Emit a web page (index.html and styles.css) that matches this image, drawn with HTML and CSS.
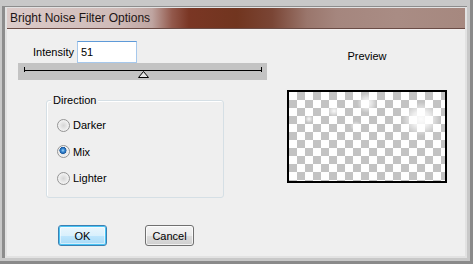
FILE: index.html
```html
<!DOCTYPE html>
<html>
<head>
<meta charset="utf-8">
<link rel="stylesheet" href="styles.css">
</head>
<body>
<div class="window">
  <div class="frame">
    <div class="titlebar">Bright Noise Filter Options</div>
    <div class="content">
      <div class="left">
        <div class="intensity">
          <label class="lbl" for="int">Intensity</label>
          <input id="int" class="num" type="text" value="51">
        </div>
        <div class="slider">
          <div class="track"></div>
          <svg class="thumb" width="11" height="7" viewBox="0 0 11 7"><polygon points="5.5,0.5 0.5,6.5 10.5,6.5" fill="#e4e4e4" stroke="#000" stroke-width="1"/></svg>
        </div>
        <div class="group">
          <span class="legend">Direction</span>
          <div class="radios">
            <div class="opt"><span class="radio"></span><span>Darker</span></div>
            <div class="opt"><span class="radio on"></span><span>Mix</span></div>
            <div class="opt"><span class="radio"></span><span>Lighter</span></div>
          </div>
        </div>
        <div class="buttons">
          <button class="btn def">OK</button>
          <button class="btn">Cancel</button>
        </div>
      </div>
      <div class="right">
        <div class="prev-label">Preview</div>
        <div class="preview"></div>
      </div>
    </div>
  </div>
</div>
</body>
</html>
```
FILE: styles.css
```css
* { box-sizing: border-box; }
html, body { margin: 0; padding: 0; background: #c6c6c6; }
body { font-family: "Liberation Sans", Arial, sans-serif; font-size: 11px; color: #000; }

.window {
  width: 473px; height: 264px;
  background: #c8c8c8;
  border-right: 3px solid #8a8a8a;
  border-bottom: 3px solid #8a8a8a;
  padding: 6px 3px 3px 2px;
}
.frame {
  height: 100%;
  border-top: 1px solid #8d8d8d;
  border-left: 3px solid #8d8d8d;
  background: #e2e2e2;
  padding: 1px 2px 2px 2px;
  display: flex; flex-direction: column;
}
.titlebar {
  height: 22px;
  font-size: 12px;
  line-height: 21px;
  padding-left: 3px;
  color: #1c1414;
  border-bottom: 1px solid #f4f0f0;
  background: linear-gradient(to right, #dccbc9 0px, #cfbbb8 110px, #bfa5a1 145px, #93594c 165px, #7a3624 182px, #71351f 230px, #7a4535 265px, #9a766c 300px, #a5867e 330px, #a98c84 390px, #a6887f 458px);
  box-shadow: inset 0 -1px 0 #6a4c46;
}
.content {
  flex: 1;
  background: #efefef;
  display: flex;
}
.left { width: 270px; }
.right { flex: 1; }

.intensity {
  margin-top: 11px;
  padding-left: 26px;
  display: flex; align-items: center;
}
.lbl { width: 44px; }
.num {
  width: 60px; height: 22px;
  border: 1px solid #a6c8ec;
  border-top-color: #5e9ad8;
  background: #fff;
  font-family: inherit; font-size: 11px;
  padding: 0 3px; margin: 0;
  outline: none;
}
.slider {
  margin-left: 11px;
  width: 249px; height: 17px;
  background: #c3c3c3;
  padding-top: 4px;
}
.track {
  margin: 0 5px 0 6px;
  height: 5px;
  border-left: 1px solid #000;
  border-right: 1px solid #000;
  background: linear-gradient(#000, #000) 0 3px / 100% 1px no-repeat;
}
.thumb { display: block; margin: -1px 0 0 120px; }

.group {
  margin: 20px 0 0 39px;
  width: 178px; height: 98px;
  border: 1px solid #d5dfe5;
  border-radius: 3px;
  box-shadow: inset 1px 1px 0 #fff;
}
.legend {
  display: inline-block;
  margin: -7px 0 0 4px;
  padding: 0 2px;
  line-height: 13px;
  background: #efefef;
  vertical-align: top;
}
.radios { margin-top: -1px; }
.opt {
  height: 26.5px;
  display: flex; align-items: center;
  padding-left: 10px;
  gap: 3px;
}
.radio {
  width: 13px; height: 13px;
  border-radius: 50%;
  border: 1px solid #949494;
  background: radial-gradient(circle at 50% 50%, #d6d6d6 0, #e6e6e6 3px, #f6f6f6 6px);
}
.radio.on {
  background:
    radial-gradient(circle at 45% 40%, #a8dcf8 0, #3a8ad6 1.6px, #1c5a9e 3.3px, rgba(0,0,0,0) 3.8px),
    radial-gradient(circle at 50% 50%, #d6d6d6 0, #e6e6e6 3px, #f6f6f6 6px);
}

.buttons {
  margin-top: 27px;
  padding-left: 51px;
  display: flex; gap: 38px;
}
.btn {
  width: 49px; height: 21px;
  margin: 0; padding: 0;
  font-family: inherit; font-size: 11px; color: #000;
  border: 1px solid #707070;
  border-radius: 3px;
  background: linear-gradient(#f4f4f4 0, #ebebeb 50%, #dddddd 51%, #cfcfcf 100%);
  box-shadow: inset 0 0 0 1px rgba(255,255,255,0.7);
}
.btn.def {
  border-color: #3c7fb1;
  background: linear-gradient(#eaf6fd 0, #d9f0fc 50%, #bee6fd 51%, #a7d9f5 100%);
  box-shadow: inset 0 0 0 1px #48c4f5, inset 0 0 0 2px rgba(255,255,255,0.5);
}

.prev-label {
  margin: 20px 0 0 10px;
  width: 160px;
  text-align: center;
  line-height: 13px;
}
.preview {
  margin: 27px 0 0 10px;
  width: 160px; height: 93px;
  border: 2px solid #000;
  background:
    radial-gradient(ellipse 19px 17px at 132px 27px, rgba(255,255,255,0.95), rgba(255,255,255,0.75) 45%, rgba(255,255,255,0) 100%),
    radial-gradient(ellipse 10px 10px at 78px 11px, rgba(255,255,255,0.95), rgba(255,255,255,0.5) 55%, rgba(255,255,255,0) 100%),
    radial-gradient(ellipse 7px 6px at 45px 19px, rgba(255,255,255,0.9), rgba(255,255,255,0) 100%),
    radial-gradient(ellipse 4px 4px at 20px 27px, rgba(255,255,255,0.9), rgba(255,255,255,0) 100%),
    radial-gradient(ellipse 6px 5px at 67px 34px, rgba(255,255,255,0.8), rgba(255,255,255,0) 100%),
    conic-gradient(#c3c3c3 25%, #ffffff 0 50%, #c3c3c3 0 75%, #ffffff 0) 0 0 / 16px 16px;
}
```
